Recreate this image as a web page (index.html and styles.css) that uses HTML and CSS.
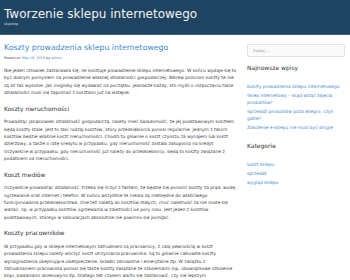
FILE: index.html
```html
<!DOCTYPE html>
<html lang="pl">
<head>
  <meta charset="UTF-8">
  <title>Tworzenie sklepu internetowego</title>
  <link rel="stylesheet" href="styles.css">
</head>
<body>

<header class="site-header">
  <h1 class="site-title">Tworzenie sklepu internetowego</h1>
  <div class="site-desc">skyshop</div>
</header>

<div class="page">
  <main class="content">
    <h2 class="entry-title">Koszty prowadzenia sklepu internetowego</h2>
    <div class="entry-meta">Posted on <a href="#">May 26, 2019</a> by <a href="#">admin</a></div>

    <p>Nie jeden człowiek zastanawia się, ile kosztuje prowadzenie sklepu internetowego. W końcu wydaje się to być dobrym pomysłem na prowadzenie własnej działalności gospodarczej. Wbrew pozorom koszty te nie są aż tak wysokie, jak mogłoby się wydawać na początku. Jednakże każdy, kto myśli o rozpoczęciu takie działalności musi się zapoznać z kosztami już na wstępie.</p>

    <h3>Koszty nieruchomości</h3>
    <p>Prowadząc jakąkolwiek działalność gospodarczą, należy mieć świadomość, że jej podstawowym kosztem będą koszty stałe. Jest to taki rodzaj kosztów, który przedsiębiorca ponosi regularnie. Jednym z takich kosztów będzie właśnie koszt nieruchomości. Chodzi tu głównie o koszt czynszu za wynajem lub koszt dzierżawy, a także o ratę kredytu w przypadku, gdy nieruchomość została zakupiona na kredyt. Oczywiście w przypadku, gdy nieruchomość już należy do przedsiębiorcy, będą to koszty związane z podatkiem od nieruchomości.</p>

    <h3>Koszt mediów</h3>
    <p>Oczywiście prowadząc działalność, trzeba się liczyć z faktem, że będzie się ponosić koszty za prąd, wodę, ogrzewanie oraz internet i telefon. W końcu wszystkie te media są niezbędne do właściwego funkcjonowania przedsiębiorstwa. One też należą do kosztów stałych, choć należność za nie może się wahać, np. w przypadku kosztów ogrzewania w zależności od pory roku. Jest jeden z kosztów podstawowych, którego w kalkulacjach absolutnie nie powinno się pomijać.</p>

    <h3>Koszty pracowników</h3>
    <p>W przypadku gdy w sklepie internetowym zatrudnieni są pracownicy, z całą pewnością w koszt prowadzenia sklepu należy wliczyć koszt utrzymania pracownika. Są to głównie całkowite koszty wynagrodzenia obejmujące ubezpieczenie, składki zdrowotne i emerytalne itp. W związku z zatrudnianiem pracownika ponosi się także koszty związane ze szkoleniami (np. obowiązkowe szkolenie bhp), badaniami okresowymi itp. Dlatego też czasem warto się zastanowić, czy nie lepszym rozwiązaniem będzie doinwestowanie np. w profesjonalne oprogramowanie dla sklepu internetowego, które pozwoli na zautomatyzowanie wielu procesów.</p>
  </main>

  <aside class="sidebar">
    <form class="search">
      <input type="search" placeholder="Szukaj …">
    </form>

    <h4 class="widget-title">Najnowsze wpisy</h4>
    <ul class="widget-list">
      <li><a href="#">Koszty prowadzenia sklepu internetowego</a></li>
      <li><a href="#">Sklep internetowy – skąd wziąć zdjęcia produktów?</a></li>
      <li><a href="#">Sprzedaż produktów poza Allegro, czyli gdzie?</a></li>
      <li><a href="#">Założenie e-sklepu nie musi być drogie</a></li>
    </ul>

    <h4 class="widget-title">Kategorie</h4>
    <ul class="widget-list">
      <li><a href="#">koszt sklepu</a></li>
      <li><a href="#">sprzedaż</a></li>
      <li><a href="#">wygląd sklepu</a></li>
    </ul>
  </aside>
</div>

</body>
</html>
```

FILE: styles.css
```css
body {
  margin: 0;
  font-family: "DejaVu Sans", sans-serif;
  color: #404040;
  background: #fff;
  height: 280px;
  overflow: hidden;
}

a {
  color: #3d8bcf;
  text-decoration: none;
}

.site-header {
  background: #1f4461;
  border-bottom: 1px solid #3c6280;
  height: 35px;
  padding: 7px 4px 0;
  box-sizing: border-box;
}

.site-title {
  margin: 0;
  font-size: 12px;
  font-weight: normal;
  color: #f2f2f2;
  line-height: 14px;
}

.site-desc {
  font-size: 3.5px;
  color: #d8dfe6;
  line-height: 5px;
  margin-top: 1px;
}

.page {
  display: grid;
  grid-template-columns: 1fr 98px;
  gap: 10px;
  padding: 0 5px 0 4px;
}

.content {
  padding-top: 7px;
}

.entry-title {
  margin: 0;
  font-size: 7.8px;
  font-weight: normal;
  color: #3d8bcf;
  line-height: 11px;
}

.entry-meta {
  font-size: 3.4px;
  line-height: 5px;
  margin: 3px 0 6px;
  color: #404040;
}

.content p {
  font-size: 4.4px;
  line-height: 7.3px;
  margin: 0 0 8.6px;
}

.content h3 {
  font-size: 6px;
  font-weight: normal;
  line-height: 8px;
  margin: 0 0 5.6px;
  color: #333;
}

.sidebar {
  padding-top: 9px;
}

.search input {
  display: block;
  width: 100%;
  box-sizing: border-box;
  height: 13px;
  border: 1px solid #e2e2e2;
  border-radius: 2px;
  background: #fafafa;
  font-family: "Liberation Serif", serif;
  font-size: 4.3px;
  padding: 0 5px;
  outline: none;
}

.search input::placeholder {
  color: #999;
}

.widget-title {
  font-size: 6px;
  font-weight: normal;
  line-height: 8px;
  margin: 7px 0 11px;
  color: #333;
}

.widget-list {
  list-style: none;
  margin: 0 0 11px;
  padding: 0;
}

.widget-list li {
  font-size: 4.4px;
  line-height: 7px;
  margin-bottom: 2px;
}
```
